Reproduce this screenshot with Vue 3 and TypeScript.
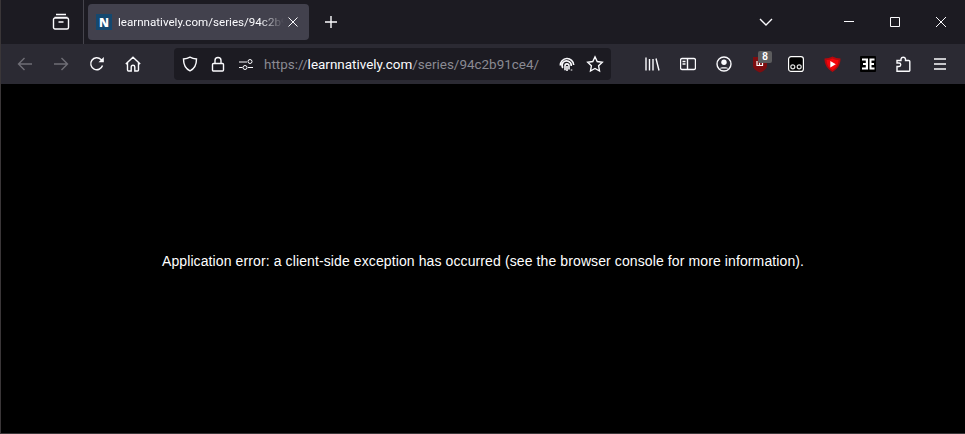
<script setup lang="ts">
const title = "learnnatively.com/series/94c2b91ce4/";
const message =
  "Application error: a client-side exception has occurred (see the browser console for more information).";
</script>

<template>
  <div class="window">
    <!-- tab strip -->
    <div class="tabbar">
      <button class="tool archive">
        <svg width="18" height="18" viewBox="0 0 18 18" class="line">
          <path d="M4 1.500h10M2.500 4.500h13M3 5h12a1.500 1.500 0 0 1 1.500 1.500v8A1.500 1.500 0 0 1 15 16H3a1.500 1.500 0 0 1-1.500-1.500v-8A1.500 1.500 0 0 1 3 5zM6.500 9h5" />
        </svg>
      </button>
      <div class="divider"></div>
      <div class="tab">
        <div class="favicon">N</div>
        <span class="tab-title">{{ title }}</span>
        <svg width="12" height="12" viewBox="0 0 12 12" class="line thin">
          <path d="M1.500 1.500l9 9M10.500 1.500l-9 9" />
        </svg>
      </div>
      <button class="tool">
        <svg width="14" height="14" viewBox="0 0 14 14" class="line">
          <path d="M7 1v12M1 7h12" />
        </svg>
      </button>
      <div class="grow"></div>
      <button class="tool chevron">
        <svg width="16" height="10" viewBox="0 0 16 10" class="line">
          <path d="M2 2l6 6 6-6" />
        </svg>
      </button>
      <div class="caption">
        <button class="caption-btn">
          <svg width="10" height="10" viewBox="0 0 10 10" class="line thin"><path d="M0 4.500h10" /></svg>
        </button>
        <button class="caption-btn">
          <svg width="10" height="10" viewBox="0 0 10 10" class="line thin"><path d="M.5.500h9v9h-9z" /></svg>
        </button>
        <button class="caption-btn">
          <svg width="10" height="10" viewBox="0 0 10 10" class="line thin"><path d="M0 0l10 10M10 0L0 10" /></svg>
        </button>
      </div>
    </div>

    <!-- nav bar -->
    <div class="toolbar">
      <button class="tool">
        <svg width="16" height="16" viewBox="0 0 16 16" class="line dim"><path d="M15 8H1.500M7.500 2l-6 6 6 6" /></svg>
      </button>
      <button class="tool">
        <svg width="16" height="16" viewBox="0 0 16 16" class="line dim"><path d="M1 8h13.500M8.500 2l6 6-6 6" /></svg>
      </button>
      <button class="tool">
        <svg width="16" height="16" viewBox="0 0 16 16" class="line">
          <path d="M13.500 9.500A6 6 0 1 1 12 3.500L14 5.500" />
          <path d="M14.800 1v5.300H9.500z" class="solid" />
        </svg>
      </button>
      <button class="tool">
        <svg width="16" height="16" viewBox="0 0 16 16" class="line">
          <path d="M.8 8L8 1.200 15.200 8M2.500 6.500V14a1 1 0 0 0 1 1h2.700v-4a1.800 1.800 0 0 1 3.600 0v4h2.700a1 1 0 0 0 1-1V6.500" />
        </svg>
      </button>

      <div class="urlbar">
        <div class="url-left">
          <span class="url-icon">
            <svg width="16" height="16" viewBox="0 0 16 16" class="line">
              <path d="M8 1.200c2 1.200 4 1.700 6.500 1.800 0 5.500-1.800 9.700-6.500 11.800C3.300 12.700 1.500 8.500 1.500 3 4 2.900 6 2.400 8 1.200z" />
            </svg>
          </span>
          <span class="url-icon">
            <svg width="16" height="16" viewBox="0 0 16 16" class="line">
              <path d="M3.500 7.500h9a1 1 0 0 1 1 1v5.500a1 1 0 0 1-1 1h-9a1 1 0 0 1-1-1V8.500a1 1 0 0 1 1-1zM5 7.500V4.500a3 3 0 0 1 6 0v3" />
            </svg>
          </span>
          <span class="url-icon">
            <svg width="16" height="16" viewBox="0 0 16 16" class="line thin">
              <path d="M1 6h8M1 11.500h3.500M10 11.500h5" />
              <circle cx="12" cy="5.500" r="2" />
              <circle cx="7" cy="11.500" r="2" />
            </svg>
          </span>
        </div>
        <div class="url-text">
          <span class="muted">https://</span>learnnatively.com<span class="muted">/series/94c2b91ce4/</span>
        </div>
        <div class="grow"></div>
        <span class="url-icon">
          <svg width="16" height="16" viewBox="0 0 16 16" class="line print">
            <path d="M1.300 9.500a6.700 6.700 0 0 1 13.400-.5M3.800 12a5 5 0 0 1 .2-5.500 4.800 4.800 0 0 1 8.300 3.500M6 14.300V10a2 2 0 0 1 4-.2v3.700M8 10v5M12.500 13.500v1" />
          </svg>
        </span>
        <span class="url-icon">
          <svg width="18" height="18" viewBox="0 0 18 18" class="line">
            <path d="M9 1.800l2.200 4.700 5.100.7-3.700 3.600.9 5.200L9 13.500l-4.500 2.500.9-5.200-3.700-3.600 5.100-.7z" />
          </svg>
        </span>
      </div>

      <div class="actions">
        <button class="tool">
          <svg width="16" height="16" viewBox="0 0 16 16" class="line">
            <path d="M2 1.500v13M5.500 3v11.500M9 3v11.500M12 2.500l3 12" />
          </svg>
        </button>
        <button class="tool">
          <svg width="16" height="16" viewBox="0 0 16 16" class="line">
            <path d="M2 2.500h12A1.500 1.500 0 0 1 15.500 4v8a1.500 1.500 0 0 1-1.500 1.500H2A1.500 1.500 0 0 1 .5 12V4A1.500 1.500 0 0 1 2 2.500zM7.500 2.500v11M2.500 5.500h3M2.500 8h3" />
          </svg>
        </button>
        <button class="tool">
          <svg width="16" height="16" viewBox="0 0 16 16" class="line">
            <circle cx="8" cy="8" r="7" />
            <circle cx="8" cy="6.300" r="2.700" class="solid" />
            <path d="M3.500 12.500c1-1.800 8-1.800 9 0" class="solid" />
          </svg>
        </button>
        <button class="tool ublock">
          <svg width="16" height="18" viewBox="0 0 16 18">
            <path d="M1 2h14v8.500c0 3.500-3.500 5.500-7 7-3.500-1.500-7-3.500-7-7z" fill="#7d0d10" />
            <path d="M5 6v4.500h2.500v-3 3H10.500V6" fill="none" stroke="#fff" stroke-width="1.200" />
          </svg>
          <span class="badge">8</span>
        </button>
        <button class="tool">
          <svg width="16" height="16" viewBox="0 0 16 16">
            <rect x=".6" y=".6" width="14.800" height="14.800" rx="2.500" fill="#000" stroke="#fff" stroke-width="1.200" />
            <circle cx="4.800" cy="10.800" r="2" fill="none" stroke="#ddd" stroke-width="1.200" />
            <circle cx="11.200" cy="10.800" r="2" fill="none" stroke="#ddd" stroke-width="1.200" />
          </svg>
        </button>
        <button class="tool">
          <svg width="17" height="16" viewBox="0 0 17 16">
            <path d="M8.500 .5c2.500 1.300 5 2 8 2 .2 6-3 10.500-8 13.500C3.500 13 .3 8.500.5 2.500c3 0 5.500-.7 8-2z" fill="#b5090d" />
            <path d="M8.500 2.500c2 1 4 1.500 6 1.600 0 4.500-2.300 7.900-6 10.100-3.700-2.200-6-5.600-6-10.100 2-.1 4-.6 6-1.600z" fill="#f2050b" />
            <path d="M6.300 5l5.500 3.300-5.500 3.300z" fill="#fff" />
          </svg>
        </button>
        <button class="tool">
          <svg width="16" height="16" viewBox="0 0 16 16">
            <rect width="16" height="16" rx="1" fill="#000" />
            <path d="M2 2.500h6v11H2v-2h3.800V9H3V7h2.800V4.500H2zM9.500 2.500h5v2H11.500V7h2.500v2h-2.500v2.500h3v2h-5z" fill="#fff" />
          </svg>
        </button>
        <button class="tool">
          <svg width="16" height="16" viewBox="0 0 16 16" class="line">
            <path d="M1 15.300v-4.800h2a1.500 1.500 0 0 0 0-3.500H1V4.500h4V3a2.300 2.300 0 0 1 4.500 0v1.500h3.300a1 1 0 0 1 1 1v9a1 1 0 0 1-1 .8z" />
          </svg>
        </button>
        <button class="tool">
          <svg width="16" height="16" viewBox="0 0 16 16" class="line">
            <path d="M2 3h12M2 8h12M2 13h12" />
          </svg>
        </button>
      </div>
    </div>

    <!-- page -->
    <main class="page">
      <p class="error">{{ message }}</p>
    </main>
  </div>
</template>

<style>
html,
body {
  margin: 0;
  background: #000;
}
</style>

<style scoped>
.window {
  width: 965px;
  height: 434px;
  box-sizing: border-box;
  display: flex;
  flex-direction: column;
  border-left: 1px solid #3a3638;
  border-bottom: 1px solid #3a3638;
  background: #000;
  overflow: hidden;
  font-family: Roboto, "Open Sans", sans-serif;
}

button {
  border: 0;
  padding: 0;
  background: none;
}

svg {
  display: block;
}

.line {
  fill: none;
  stroke: #fbfbfe;
  stroke-width: 1.4;
}

.line.thin {
  stroke-width: 1;
}

.line.dim {
  stroke: #6f6e76;
}

.line.print {
  stroke-width: 1.6;
}

.line .solid {
  fill: #fbfbfe;
  stroke: none;
}

.grow {
  flex: 1;
}

.tool {
  position: relative;
  width: 36px;
  height: 36px;
  flex: none;
  display: flex;
  align-items: center;
  justify-content: center;
}

.tabbar {
  height: 44px;
  flex: none;
  display: flex;
  align-items: center;
  background: #1c1b22;
}

.archive {
  margin-left: 42px;
}

.divider {
  width: 1px;
  height: 44px;
  margin: 0 4px 0 4px;
  background: #45444c;
}

.tab {
  width: 221px;
  height: 36px;
  box-sizing: border-box;
  padding: 0 10px 0 8px;
  margin-right: 4px;
  display: flex;
  align-items: center;
  border-radius: 4px;
  background: #42414d;
  color: #fbfbfe;
  font-size: 11.6px;
}

.favicon {
  width: 16px;
  height: 16px;
  flex: none;
  display: flex;
  align-items: center;
  justify-content: center;
  background: #14486f;
  color: #fff;
  font-family: "Open Sans", sans-serif;
  font-size: 12px;
  font-weight: 800;
}

.tab-title {
  flex: 1;
  min-width: 0;
  margin: 0 3px 0 6px;
  white-space: nowrap;
  overflow: hidden;
  -webkit-mask-image: linear-gradient(to right, #000 85%, transparent);
  mask-image: linear-gradient(to right, #000 85%, transparent);
}

.chevron {
  margin-right: 42px;
}

.caption {
  display: flex;
  margin-right: 1px;
}

.caption-btn {
  width: 46px;
  height: 44px;
  display: flex;
  align-items: center;
  justify-content: center;
}

.toolbar {
  height: 40px;
  flex: none;
  box-sizing: border-box;
  padding-left: 6px;
  display: flex;
  align-items: center;
  background: #2b2a33;
}

.urlbar {
  width: 437px;
  height: 32px;
  box-sizing: border-box;
  margin: 0 23px;
  padding: 0 2px;
  display: flex;
  align-items: center;
  border-radius: 4px;
  background: #1c1b22;
}

.url-left {
  display: flex;
}

.url-icon {
  width: 28px;
  height: 28px;
  flex: none;
  display: flex;
  align-items: center;
  justify-content: center;
}

.url-text {
  margin-left: 4px;
  color: #fbfbfe;
  font-size: 13.46px;
  white-space: nowrap;
}

.muted {
  color: #8a8a92;
}

.actions {
  display: flex;
}

.badge {
  position: absolute;
  top: 5px;
  left: 16px;
  width: 14px;
  height: 12px;
  border-radius: 2px;
  background: #5c5c5e;
  color: #fff;
  font-size: 10px;
  font-weight: 700;
  line-height: 12px;
  text-align: center;
}

.page {
  flex: 1;
  display: flex;
  align-items: center;
  justify-content: center;
  padding-top: 4px;
}

.error {
  margin: 0;
  color: #fff;
  font-family: "Liberation Sans", Arial, sans-serif;
  font-size: 14px;
  letter-spacing: 0.107px;
  line-height: 20px;
}
</style>
